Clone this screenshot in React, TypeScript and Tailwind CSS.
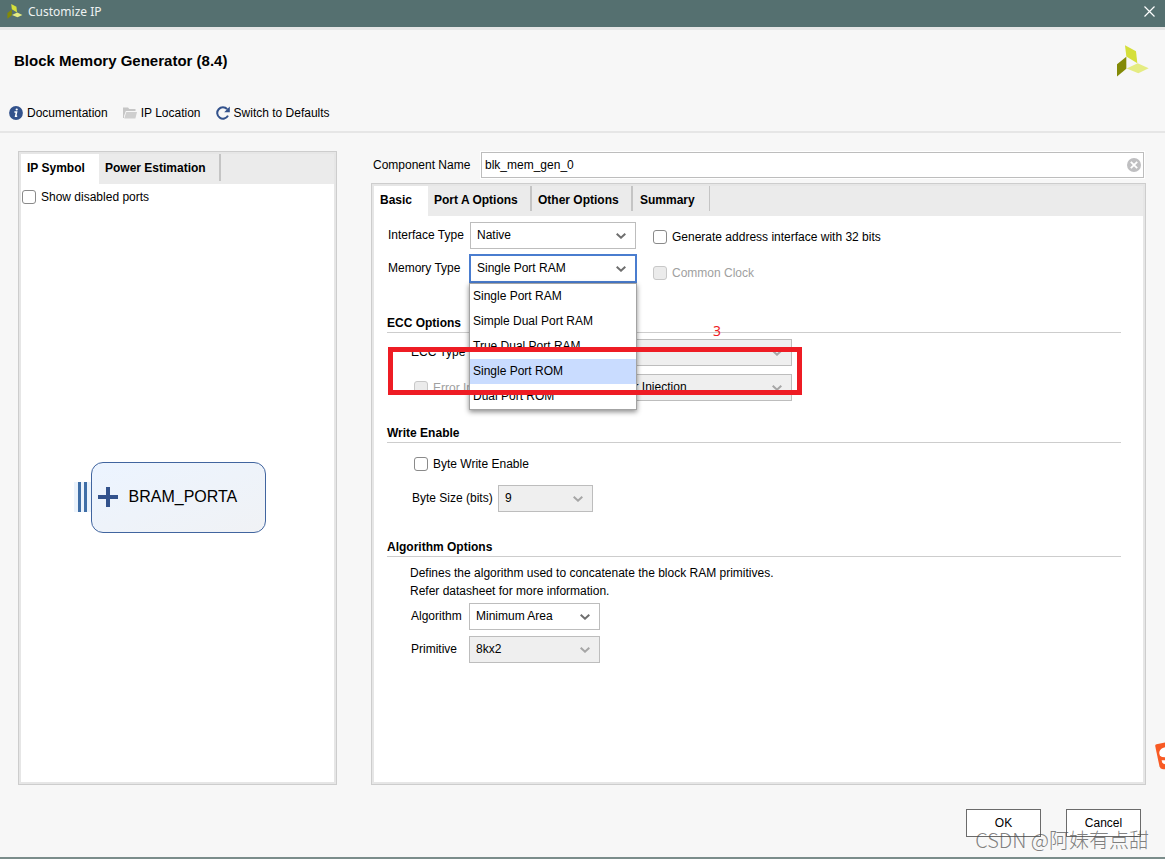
import React, { useState } from "react";

const FONT = "font-['Liberation_Sans',Arial,sans-serif]";

function Logo({ className }: { className: string }) {
  return (
    <svg viewBox="0 0 96 95" className={className} aria-hidden="true">
      <polygon points="24,0 57,18 61,54 28,34" fill="#d5df3a" />
      <polygon points="0,57 28,35 28,71 0,94" fill="#838a07" />
      <polygon points="29,70 62,54 95,69 64,84" fill="#e5ec82" />
    </svg>
  );
}

function Chevron({ className }: { className: string }) {
  return (
    <svg viewBox="0 0 10 6" className={className} fill="none" strokeWidth="2" aria-hidden="true">
      <path d="M0.7 0.8 L5 4.7 L9.3 0.8" />
    </svg>
  );
}

type ComboProps = {
  id: string;
  options: string[];
  defaultValue?: string;
  disabled?: boolean;
  focused?: boolean;
  className?: string;
};

function Combo({ id, options, defaultValue, disabled, focused, className = "" }: ComboProps) {
  return (
    <div className={`relative ${className}`}>
      <select
        id={id}
        disabled={disabled}
        defaultValue={defaultValue ?? options[0]}
        className={`block w-full appearance-none rounded-none pr-6 text-xs text-black opacity-100 outline-none ${
          focused ? "h-[29px] border-2 border-[#4a7dcf] pb-[2px] pl-[6px]" : "h-[27px] border border-[#bdbdbd] pb-[2px] pl-[6px]"
        } ${disabled ? "bg-[#efefef]" : "bg-white"}`}
      >
        {options.map((o) => (
          <option key={o}>{o}</option>
        ))}
      </select>
      <Chevron
        className={`pointer-events-none absolute top-1/2 h-[6px] w-[10px] -translate-y-1/2 ${
          focused ? "right-[11px]" : "right-[10px]"
        } ${disabled ? "stroke-[#a6a6a6]" : "stroke-[#6e6e6e]"}`}
      />
    </div>
  );
}

function Check({ id, label, disabled }: { id: string; label: string; disabled?: boolean }) {
  return (
    <div className="flex h-[14px] items-center gap-[5px]">
      <input
        id={id}
        type="checkbox"
        disabled={disabled}
        className="size-[14px] shrink-0 appearance-none rounded-[3px] border border-[#8a8a8a] bg-white checked:bg-[#4a7dcf] disabled:border-[#c8c8c8] disabled:bg-[#ebebeb]"
      />
      <label htmlFor={id} className={`whitespace-nowrap ${disabled ? "text-[#a0a0a0]" : ""}`}>
        {label}
      </label>
    </div>
  );
}

function Heading({ children, className }: { children: React.ReactNode; className: string }) {
  return <h2 className={`border-b border-[#cdcdcd] font-bold leading-[18px] ${className}`}>{children}</h2>;
}

function Panel({ children, className = "" }: { children: React.ReactNode; className?: string }) {
  return (
    <section className={`flex border border-[#cdcdcd] ${className}`}>
      <div className="flex min-w-0 flex-1 flex-col border-2 border-[#e6e6e6] bg-white">{children}</div>
    </section>
  );
}

const memoryTypes = [
  "Single Port RAM",
  "Simple Dual Port RAM",
  "True Dual Port RAM",
  "Single Port ROM",
  "Dual Port ROM",
];

export default function App() {
  const [name, setName] = useState("blk_mem_gen_0");

  return (
    <div className={`flex min-h-screen flex-col border-b-2 border-[#7b8d8b] bg-[#f7f7f7] text-xs text-black ${FONT}`}>
      <div className="flex h-[30px] items-center border-b-[3px] border-[#e6e6e6] bg-[#557070] pb-1 pl-[7px] pr-[10px] text-[#eef2f2]">
        <Logo className="h-[15px] w-[16px]" />
        <span className="ml-[5px] font-['Noto_Sans',sans-serif]">Customize IP</span>
        <button type="button" aria-label="Close" className="ml-auto">
          <svg viewBox="0 0 11 11" className="size-[11px]" stroke="#fff" strokeWidth="1.2" aria-hidden="true">
            <path d="M0.5 0.5 L10.5 10.5 M10.5 0.5 L0.5 10.5" />
          </svg>
        </button>
      </div>

      <header className="flex justify-between border-b-2 border-[#e6e6e6] pb-2 pl-[9px] pr-4">
        <div className="pt-[22px]">
          <h1 className="pl-[5px] text-[15px] font-bold leading-[18px]">Block Memory Generator (8.4)</h1>
          <nav className="mt-[33px] flex h-5 items-center gap-[15px]">
            <button type="button" className="flex items-center gap-1">
              <svg viewBox="0 0 14 14" className="size-[14px]" aria-hidden="true">
                <circle cx="7" cy="7" r="6.9" fill="#33528c" />
                <circle cx="7.7" cy="3.5" r="1.1" fill="#fff" />
                <path d="M5.4 5.9 H7.6 L6.6 10.3 H8.2" fill="none" stroke="#fff" strokeWidth="1.5" />
              </svg>
              Documentation
            </button>
            <button type="button" className="flex items-center gap-1">
              <svg viewBox="0 0 14 12" className="h-[12px] w-[14px]" aria-hidden="true">
                <path d="M0 0.5 H5 L6.3 2 H12.5 V4 H2.8 L1 9 V11 H0 Z" fill="#c6c6c6" />
                <path d="M3.3 4.9 H14 L12.4 11.6 H1.2 Z" fill="#cfcfcf" />
              </svg>
              IP Location
            </button>
            <button type="button" className="flex items-center gap-1">
              <svg viewBox="0 0 14 14" className="size-[14px]" aria-hidden="true">
                <path d="M11.2 3.2 A5.7 5.7 0 1 0 12 9.6" fill="none" stroke="#33528c" strokeWidth="2" />
                <path d="M13.8 0.6 V6.2 H8.2 Z" fill="#33528c" />
              </svg>
              Switch to Defaults
            </button>
          </nav>
        </div>
        <Logo className="mt-[15px] h-[32px] w-[32px]" />
      </header>

      <main className="flex flex-1 gap-[34px] pl-[18px] pr-[19px] pt-[18px]">
        <Panel className="w-[319px] shrink-0">
          <div role="tablist" className="flex h-[30px] bg-[#ebebeb] font-bold">
            <button type="button" role="tab" aria-selected="true" className="w-[78px] bg-white pb-1 pl-[6px] pt-px text-left">
              IP Symbol
            </button>
            <button
              type="button"
              role="tab"
              aria-selected="false"
              className="h-[27px] w-[122px] border-r-2 border-[#c4c4c4] pl-[6px] text-left"
            >
              Power Estimation
            </button>
          </div>
          <div className="flex h-[28px] items-start pl-px pt-[6px]">
            <Check id="show-disabled" label="Show disabled ports" />
          </div>
          <div className="flex flex-1 items-center justify-center pr-4">
            <div className="flex h-[30px] w-[17px] items-stretch gap-[3px] bg-[#ebf3fc] pl-1">
              <span className="w-[3px] bg-[#3f6ea6]" />
              <span className="w-[3px] bg-[#3f6ea6]" />
            </div>
            <div className="flex h-[71px] w-[175px] items-center gap-[11px] rounded-[12px] border border-[#41659f] bg-linear-to-br from-[#ecf4ff] to-[#f0f2f5] pl-[6px] text-base">
              <svg viewBox="0 0 20 20" className="size-5" aria-hidden="true">
                <path d="M10 0 V20 M0 10 H20" stroke="#33528c" strokeWidth="4" />
              </svg>
              BRAM_PORTA
            </div>
          </div>
        </Panel>

        <div className="flex min-w-0 flex-1 flex-col">
          <div className="mb-1 flex h-7 items-center pl-[2px] pr-px">
            <label htmlFor="component-name" className="w-[107px] shrink-0">
              Component Name
            </label>
            <div className="relative flex-1 border border-white">
              <input
                id="component-name"
                value={name}
                onChange={(e) => setName(e.target.value)}
                className="block h-[26px] w-full border border-[#bdbdbd] bg-white pl-[3px] pr-6 outline-none"
              />
              <button type="button" aria-label="Clear" onClick={() => setName("")} className="absolute right-[3px] top-[6px]">
                <svg viewBox="0 0 14 14" className="size-[14px]" aria-hidden="true">
                  <circle cx="7" cy="7" r="7" fill="#bfbfc1" />
                  <path d="M3.8 3.8 L10.2 10.2 M10.2 3.8 L3.8 10.2" stroke="#fff" strokeWidth="1.8" />
                </svg>
              </button>
            </div>
          </div>

          <Panel className="flex-1">
            <div role="tablist" className="flex h-[30px] bg-[#ebebeb] font-bold">
              <button type="button" role="tab" aria-selected="true" className="w-[54px] bg-white pb-1 pl-[6px] pt-px text-left">
                Basic
              </button>
              <button type="button" role="tab" aria-selected="false" className="h-[25px] w-[104px] border-r-2 border-[#c4c4c4] pl-[6px] pt-[2px] text-left">
                Port A Options
              </button>
              <button type="button" role="tab" aria-selected="false" className="h-[25px] w-[101px] border-r-2 border-[#c4c4c4] pl-[6px] pt-[2px] text-left">
                Other Options
              </button>
              <button type="button" role="tab" aria-selected="false" className="h-[25px] w-[77px] border-r border-[#c4c4c4] pl-[7px] pt-[2px] text-left">
                Summary
              </button>
            </div>

            <div className="pl-[13px] pr-[22px] pt-[6px]">
              <div className="flex gap-4">
                <div className="grid grid-cols-[82px_168px] gap-y-[5px]">
                  <label htmlFor="interface-type" className="self-center pb-px pl-px">
                    Interface Type
                  </label>
                  <Combo id="interface-type" options={["Native", "AXI4"]} className="mx-px" />
                  <label htmlFor="memory-type" className="self-center pb-px pl-px">
                    Memory Type
                  </label>
                  <div className="relative">
                    <Combo id="memory-type" options={memoryTypes} focused />
                    <ul
                      role="listbox"
                      aria-label="Memory Type"
                      className="absolute inset-x-0 top-full z-10 border border-[#a3a3a3] bg-white shadow-[0_2px_5px_rgba(0,0,0,0.45)]"
                    >
                      {memoryTypes.map((t) => (
                        <li
                          key={t}
                          role="option"
                          aria-selected={t === "Single Port ROM"}
                          className={`h-[25px] pl-[3px] leading-[24px] ${t === "Single Port ROM" ? "bg-[#c9dcff]" : ""}`}
                        >
                          {t}
                        </li>
                      ))}
                    </ul>
                  </div>
                </div>
                <div className="flex flex-col gap-[22px] pt-2">
                  <Check id="addr-32" label="Generate address interface with 32 bits" />
                  <Check id="common-clock" label="Common Clock" disabled />
                </div>
              </div>

              <div className="relative">
                <Heading className="mt-[31px]">ECC Options</Heading>
                <div className="mt-[6px] flex w-[405px] items-center pl-6">
                  <label htmlFor="ecc-type" className="w-[59px] pb-px">
                    ECC Type
                  </label>
                  <Combo id="ecc-type" options={["No ECC"]} disabled className="flex-1" />
                </div>
                <div className="mt-2 flex w-[405px] items-center gap-[14px] pl-[27px]">
                  <Check id="error-injection" label="Error Injection Type" disabled />
                  <Combo id="error-type" options={["Single Bit Error Injection"]} disabled className="flex-1" />
                </div>
                <span className="absolute left-[326px] top-2 font-['Noto_Sans',sans-serif] text-sm leading-[18px] text-[#ee1c24]">3</span>
                <div className="pointer-events-none absolute left-px top-[33px] z-20 h-[48px] w-[414px] border-5 border-[#ee1c24]" />
              </div>

              <Heading className="mt-[23px]">Write Enable</Heading>
              <div className="mt-[14px] pl-[27px]">
                <Check id="byte-write" label="Byte Write Enable" />
              </div>
              <div className="mt-[14px] flex items-center pl-[25px]">
                <label htmlFor="byte-size" className="w-[86px] pb-px">
                  Byte Size (bits)
                </label>
                <Combo id="byte-size" options={["9", "8"]} disabled className="w-[95px]" />
              </div>

              <Heading className="mt-[26px]">Algorithm Options</Heading>
              <p className="mt-[7px] pl-[23px] leading-[18px]">
                Defines the algorithm used to concatenate the block RAM primitives.
                <br />
                Refer datasheet for more information.
              </p>
              <div className="mt-[3px] grid grid-cols-[58px_131px] items-center gap-y-[6px] pb-6 pl-6">
                <label htmlFor="algorithm" className="pb-px">
                  Algorithm
                </label>
                <Combo id="algorithm" options={["Minimum Area", "Low Power", "Fixed Primitives"]} />
                <label htmlFor="primitive" className="pb-px">
                  Primitive
                </label>
                <Combo id="primitive" options={["8kx2"]} disabled />
              </div>
            </div>
          </Panel>
        </div>
      </main>

      <footer className="relative flex justify-end gap-[25px] pb-5 pr-6 pt-6">
        <button type="button" className="h-7 w-[75px] border border-[#6b6b6b] bg-white">
          OK
        </button>
        <button type="button" className="h-7 w-[75px] border border-[#6b6b6b] bg-white">
          Cancel
        </button>
        <span className="pointer-events-none absolute bottom-[3px] right-4 whitespace-nowrap font-['Noto_Sans_CJK_SC',sans-serif] text-[20px] font-light leading-7 text-[#4a4a4a]/70">
          CSDN @阿妹有点甜
        </span>
        <svg viewBox="0 0 10 28" className="absolute -top-[43px] right-0 h-[28px] w-[10px]" aria-hidden="true">
          <path d="M10 0.5 L1.5 2.2 Q0 2.6 0.2 4 L4.5 24.5 Q5.2 27 8 27.3 H10 Z" fill="#f85a24" />
          <path d="M10 5.2 Q5 6.5 4.3 10 Q4 14 7 15 L10 15.3 Z" fill="#fff" />
          <path d="M10 18.2 H6.6 Q7 22 10 22.3 Z" fill="#fff" />
        </svg>
      </footer>
    </div>
  );
}
